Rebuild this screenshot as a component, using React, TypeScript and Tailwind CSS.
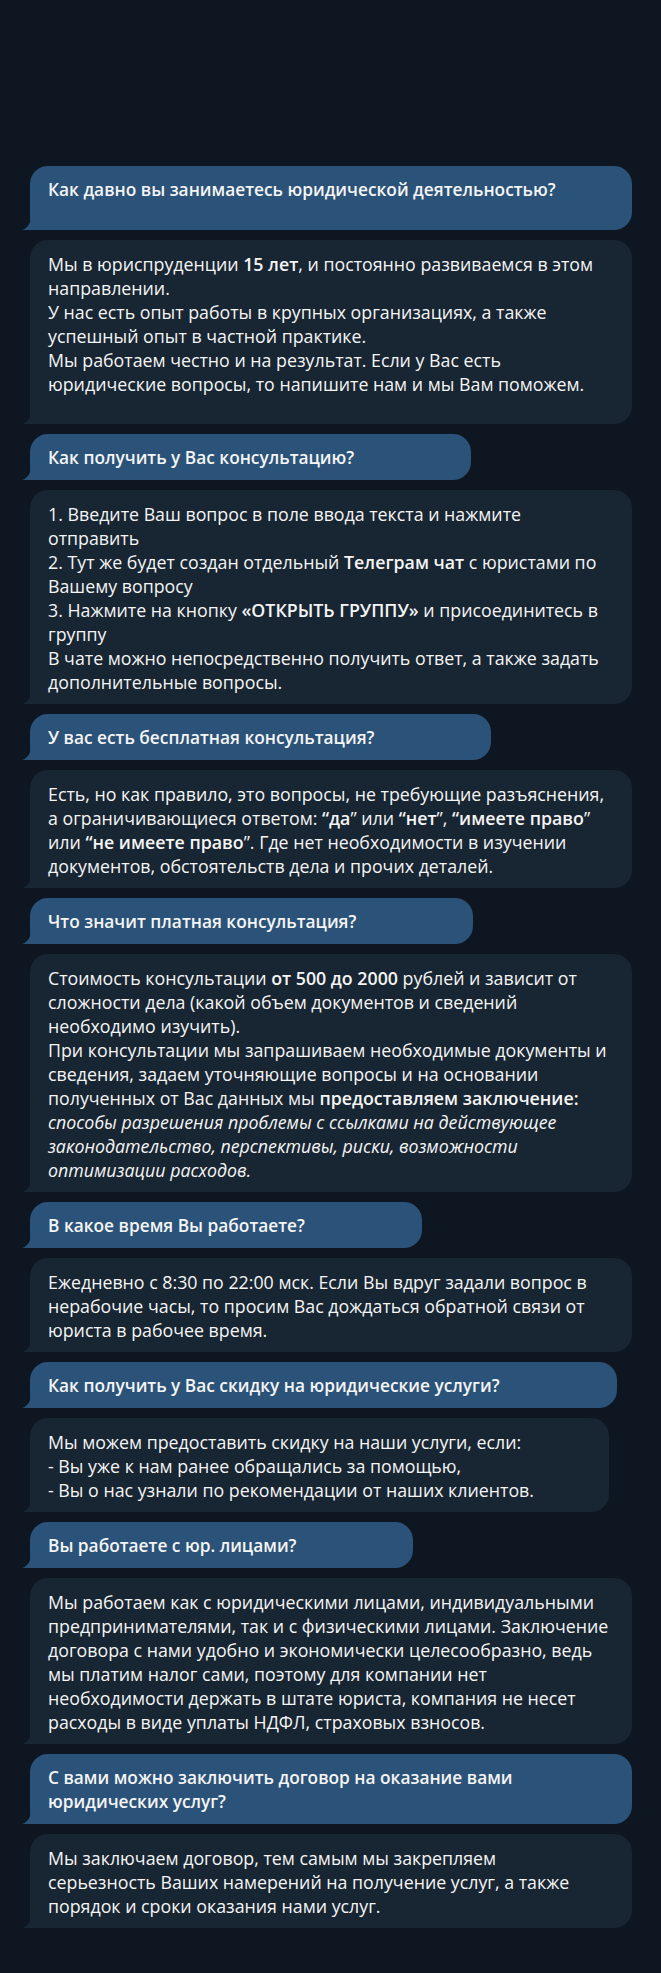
import type { ReactNode } from "react";

function Tail({ color }: { color: string }) {
  return (
    <svg
      className="absolute bottom-0 -left-[8px]"
      width="9"
      height="13"
      viewBox="0 0 9 13"
      fill={color}
    >
      <path d="M9 0 C9 6 6 10.5 0.5 13 L9 13 Z" />
    </svg>
  );
}

// invisible room kept for the time / read marks, like in a chat bubble
function Meta({ out }: { out?: boolean }) {
  return <span className={`float-right h-[18px] ${out ? "w-[99px]" : "w-[57px]"}`} />;
}

function Question({ children }: { children: ReactNode }) {
  return (
    <div className="relative flow-root w-fit max-w-full rounded-[18px] rounded-bl-none bg-[#2b5278] pl-[18px] pr-[18px] pt-3 pb-2.5 text-[17.3px] font-semibold">
      {children}
      <Meta out />
      <Tail color="#2b5278" />
    </div>
  );
}

function Answer({ children }: { children: ReactNode }) {
  return (
    <div className="relative flow-root w-fit max-w-full rounded-[18px] rounded-bl-none bg-[#182533] pl-[18px] pr-[18px] pt-3 pb-2.5">
      {children}
      <Meta />
      <Tail color="#182533" />
    </div>
  );
}

function B({ children }: { children: ReactNode }) {
  return <b className="font-semibold">{children}</b>;
}

export default function App() {
  return (
    <div className="min-h-screen bg-[#0e1621] pl-[30px] pr-[29px] pt-[166px] pb-[45px] font-['Open_Sans',sans-serif] text-[17.8px] leading-6 text-[#f5f5f5]">
      <div className="flex flex-col gap-2.5">
        <Question>Как давно вы занимаетесь юридической деятельностью?</Question>
        <Answer>
          Мы в юриспруденции <B>15 лет</B>, и постоянно развиваемся в этом направлении.
          <br />
          У нас есть опыт работы в крупных организациях, а также успешный опыт в частной практике.
          <br />
          Мы работаем честно и на результат. Если у Вас есть юридические вопросы, то напишите нам и
          мы Вам поможем.
        </Answer>

        <Question>Как получить у Вас консультацию?</Question>
        <Answer>
          1. Введите Ваш вопрос в поле ввода текста и нажмите отправить
          <br />
          2. Тут же будет создан отдельный <B>Телеграм чат</B> с юристами по Вашему вопросу
          <br />
          3. Нажмите на кнопку <B>«ОТКРЫТЬ ГРУППУ»</B> и присоединитесь в группу
          <br />
          В чате можно непосредственно получить ответ, а также задать дополнительные вопросы.
        </Answer>

        <Question>У вас есть бесплатная консультация?</Question>
        <Answer>
          Есть, но как правило, это вопросы, не требующие разъяснения, а ограничивающиеся ответом:{" "}
          <B>“да</B>” или <B>“нет</B>”, <B>“имеете право</B>” или <B>“не имеете право</B>”. Где нет
          необходимости в изучении документов, обстоятельств дела и прочих деталей.
        </Answer>

        <Question>Что значит платная консультация?</Question>
        <Answer>
          Стоимость консультации <B>от 500 до 2000</B> рублей и зависит от сложности дела (какой
          объем документов и сведений необходимо изучить).
          <br />
          При консультации мы запрашиваем необходимые документы и сведения, задаем уточняющие
          вопросы и на основании полученных от Вас данных мы <B>предоставляем заключение:</B>{" "}
          <i>
            способы разрешения проблемы с ссылками на действующее законодательство, перспективы,
            риски, возможности оптимизации расходов.
          </i>
        </Answer>

        <Question>В какое время Вы работаете?</Question>
        <Answer>
          Ежедневно с 8:30 по 22:00 мск. Если Вы вдруг задали вопрос в нерабочие часы, то просим Вас
          дождаться обратной связи от юриста в рабочее время.
        </Answer>

        <Question>Как получить у Вас скидку на юридические услуги?</Question>
        <Answer>
          Мы можем предоставить скидку на наши услуги, если:
          <br />- Вы уже к нам ранее обращались за помощью,
          <br />- Вы о нас узнали по рекомендации от наших клиентов.
        </Answer>

        <Question>Вы работаете с юр. лицами?</Question>
        <Answer>
          Мы работаем как с юридическими лицами, индивидуальными предпринимателями, так и с
          физическими лицами. Заключение договора с нами удобно и экономически целесообразно, ведь
          мы платим налог сами, поэтому для компании нет необходимости держать в штате юриста,
          компания не несет расходы в виде уплаты НДФЛ, страховых взносов.
        </Answer>

        <Question>С вами можно заключить договор на оказание вами юридических услуг?</Question>
        <Answer>
          Мы заключаем договор, тем самым мы закрепляем
          <br />
          серьезность Ваших намерений на получение услуг, а также порядок и сроки оказания нами
          услуг.
        </Answer>
      </div>
    </div>
  );
}
